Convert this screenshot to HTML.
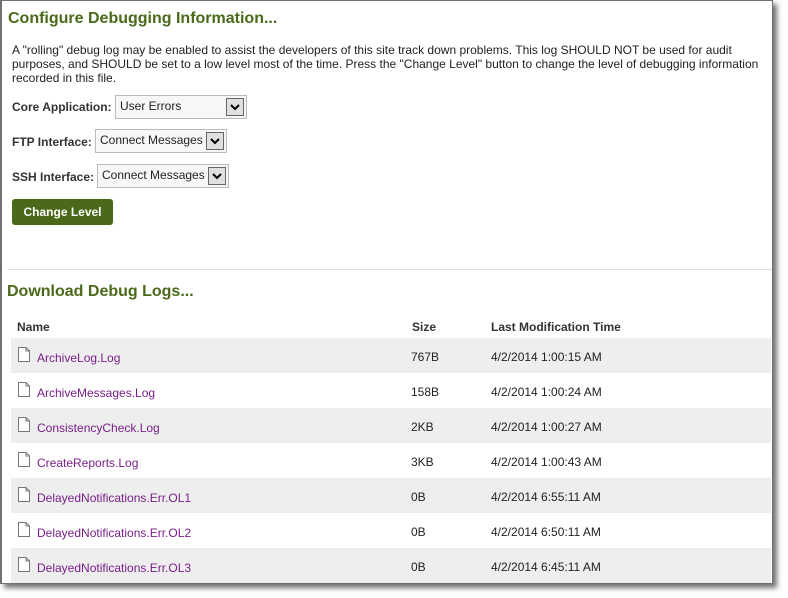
<!DOCTYPE html>
<html><head><style>
*{margin:0;padding:0;box-sizing:border-box}
body{width:788px;height:598px;background:#fff;font-family:"Liberation Sans",Arial,sans-serif;font-size:12px;color:#222;position:relative;overflow:hidden}
.frame{position:absolute;left:0;top:0;width:773px;height:584px;border:1px solid #707070;border-left:2px solid #707070;box-shadow:4px 4px 5px rgba(0,0,0,.55);background:#fff;overflow:hidden}
.a{position:absolute;white-space:nowrap}
h2{position:absolute;font-size:16px;font-weight:bold;color:#4a6a1a;white-space:nowrap}
.lbl{font-weight:bold;color:#333}
.sel{position:absolute;height:24px;border:1px solid #bbb;background:#f7f7f7;padding:3px 0 0 4px;font-size:12px}
.sel i{position:absolute;right:2px;top:2px;width:18px;height:18px;border:1px solid #666;background:#e0e0e0}
.sel i svg{position:absolute;left:3px;top:5px}
.btn{position:absolute;left:10px;top:198px;width:101px;height:26px;background:#4a6a1a;color:#fff;font-weight:bold;font-size:12px;text-align:center;line-height:26px;border-radius:3px}
.row{position:absolute;left:11px;width:760px;height:35px}
.row.g{background:#eee}
.row svg{position:absolute;left:6px;top:8px}
.row .n{position:absolute;left:26px;top:13px;color:#7a1f8a}
.row .s{position:absolute;left:400px;top:12px}
.row .t{position:absolute;left:480px;top:12px}
</style></head><body>
<div class="frame">
<h2 style="left:6px;top:9px">Configure Debugging Information...</h2>
<div class="a" style="left:10px;top:42px;line-height:14px;white-space:normal;width:750px">A "rolling" debug log may be enabled to assist the developers of this site track down problems. This log SHOULD NOT be used for audit purposes, and SHOULD be set to a low level most of the time. Press the "Change Level" button to change the level of debugging information recorded in this file.</div>
<div class="a lbl" style="left:10px;top:99px">Core Application:</div>
<div class="sel" style="left:113px;top:94px;width:132px">User Errors<i><svg width="10" height="7"><path d="M1 1L5 5L9 1" stroke="#000" stroke-width="2" fill="none"/></svg></i></div>
<div class="a lbl" style="left:10px;top:134px">FTP Interface:</div>
<div class="sel" style="left:93px;top:128px;width:132px">Connect Messages<i><svg width="10" height="7"><path d="M1 1L5 5L9 1" stroke="#000" stroke-width="2" fill="none"/></svg></i></div>
<div class="a lbl" style="left:10px;top:169px">SSH Interface:</div>
<div class="sel" style="left:95px;top:163px;width:132px">Connect Messages<i><svg width="10" height="7"><path d="M1 1L5 5L9 1" stroke="#000" stroke-width="2" fill="none"/></svg></i></div>
<div class="btn">Change Level</div>
<div class="a" style="left:5px;top:268px;width:770px;height:1px;background:#ddd"></div>
<h2 style="left:5px;top:282px">Download Debug Logs...</h2>
<div class="a lbl" style="left:15px;top:319px">Name</div>
<div class="a lbl" style="left:410px;top:319px">Size</div>
<div class="a lbl" style="left:489px;top:319px">Last Modification Time</div>
</div>
<div style="position:absolute;left:0;top:0">
<div class="row g" style="top:338px"><svg width="14" height="17"><path d="M1.5 1.5H9L12.5 5V15.5H1.5Z M9 1.5V5H12.5" fill="#fff" stroke="#777"/></svg><span class="n">ArchiveLog.Log</span><span class="s">767B</span><span class="t">4/2/2014 1:00:15 AM</span></div>
<div class="row" style="top:373px"><svg width="14" height="17"><path d="M1.5 1.5H9L12.5 5V15.5H1.5Z M9 1.5V5H12.5" fill="#fff" stroke="#777"/></svg><span class="n">ArchiveMessages.Log</span><span class="s">158B</span><span class="t">4/2/2014 1:00:24 AM</span></div>
<div class="row g" style="top:408px"><svg width="14" height="17"><path d="M1.5 1.5H9L12.5 5V15.5H1.5Z M9 1.5V5H12.5" fill="#fff" stroke="#777"/></svg><span class="n">ConsistencyCheck.Log</span><span class="s">2KB</span><span class="t">4/2/2014 1:00:27 AM</span></div>
<div class="row" style="top:443px"><svg width="14" height="17"><path d="M1.5 1.5H9L12.5 5V15.5H1.5Z M9 1.5V5H12.5" fill="#fff" stroke="#777"/></svg><span class="n">CreateReports.Log</span><span class="s">3KB</span><span class="t">4/2/2014 1:00:43 AM</span></div>
<div class="row g" style="top:478px"><svg width="14" height="17"><path d="M1.5 1.5H9L12.5 5V15.5H1.5Z M9 1.5V5H12.5" fill="#fff" stroke="#777"/></svg><span class="n">DelayedNotifications.Err.OL1</span><span class="s">0B</span><span class="t">4/2/2014 6:55:11 AM</span></div>
<div class="row" style="top:513px"><svg width="14" height="17"><path d="M1.5 1.5H9L12.5 5V15.5H1.5Z M9 1.5V5H12.5" fill="#fff" stroke="#777"/></svg><span class="n">DelayedNotifications.Err.OL2</span><span class="s">0B</span><span class="t">4/2/2014 6:50:11 AM</span></div>
<div class="row g" style="top:548px;height:35px"><svg width="14" height="17"><path d="M1.5 1.5H9L12.5 5V15.5H1.5Z M9 1.5V5H12.5" fill="#fff" stroke="#777"/></svg><span class="n">DelayedNotifications.Err.OL3</span><span class="s">0B</span><span class="t">4/2/2014 6:45:11 AM</span></div>
</div>
</body></html>
